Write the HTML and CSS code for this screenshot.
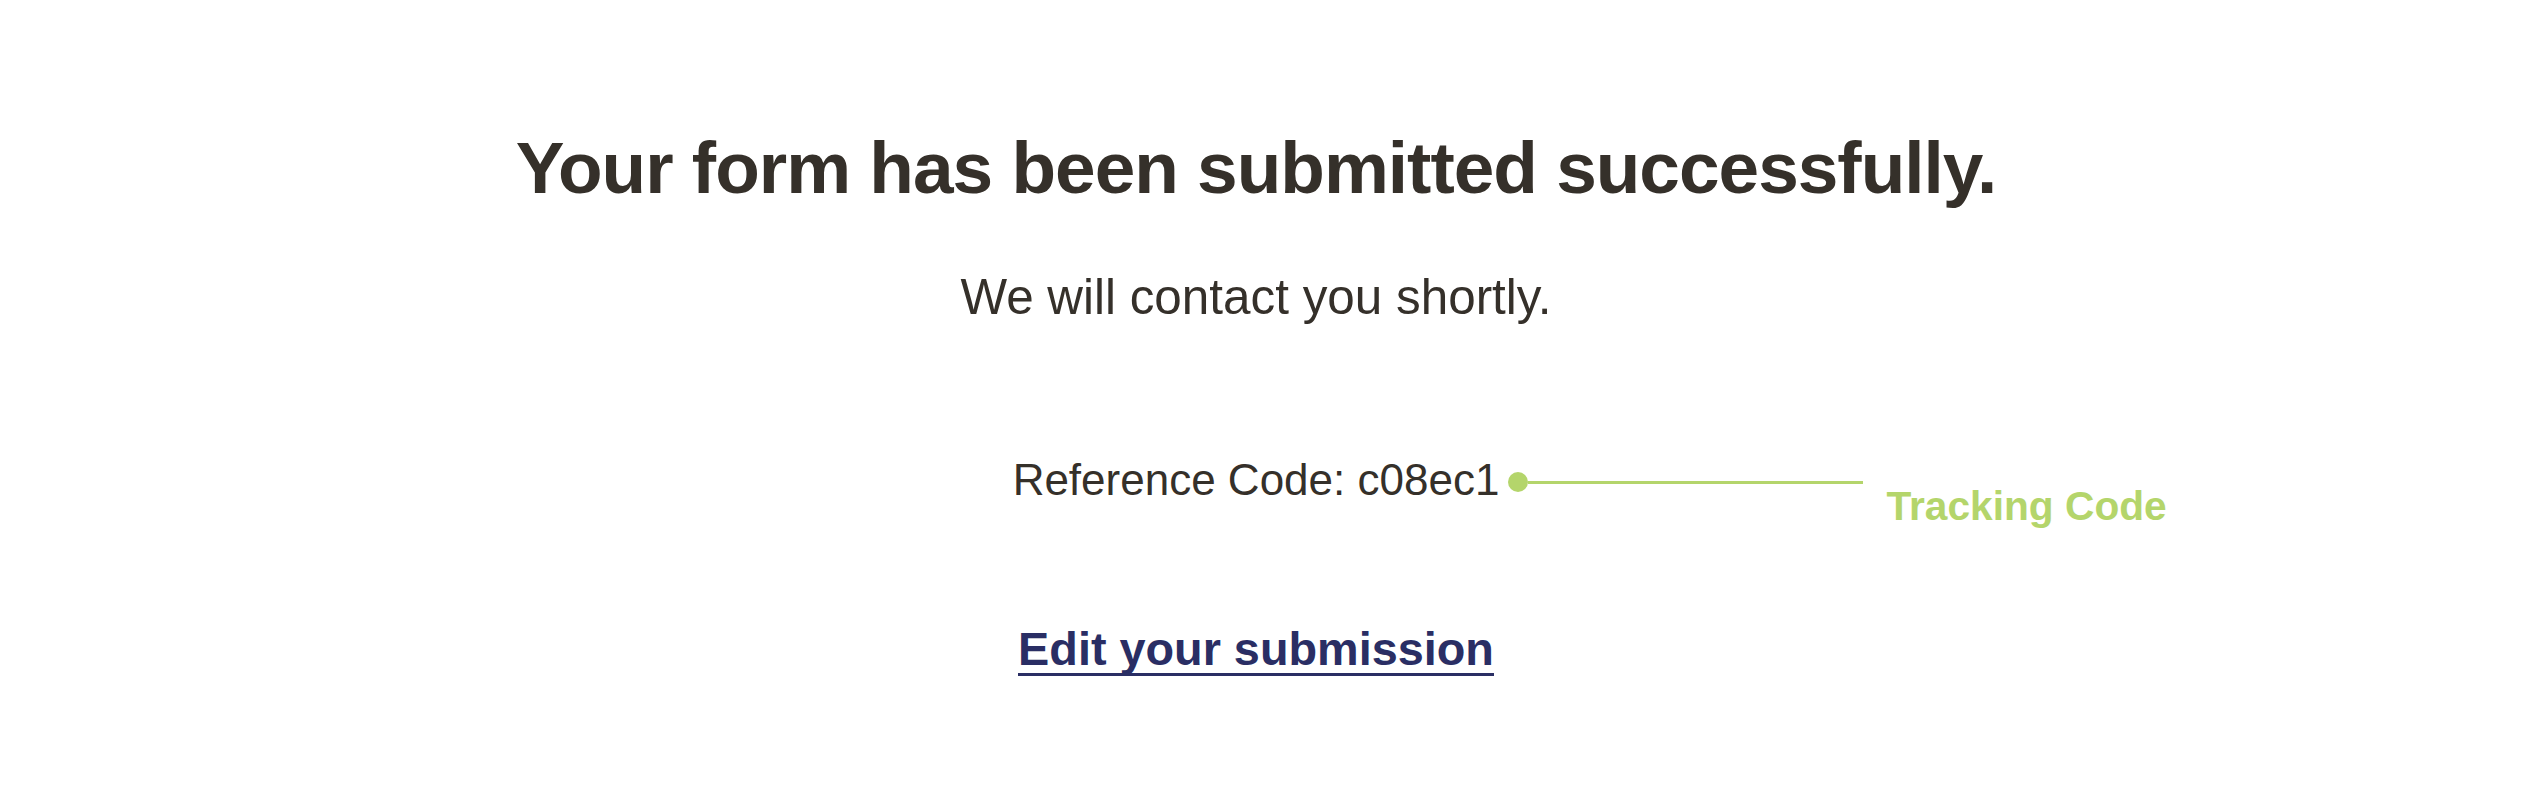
FILE: index.html
```html
<!DOCTYPE html>
<html lang="en">
<head>
  <meta charset="UTF-8" />
  <title>Form submitted</title>
  <meta name="viewport" content="width=device-width, initial-scale=1.0"/>
  <link rel="stylesheet" href="styles.css">
</head>
<body>
  <div class="thanks">
    <h1>Your form has been submitted successfully.</h1>
    <p class="lead">We will contact you shortly.</p>

    <div class="ref-line">
      <span class="ref">Reference Code: c08ec1
        <span class="note">
          <span class="pin"><i class="dot"></i><i class="wire"></i></span>
          <span class="note-label">Tracking Code</span>
        </span>
      </span>
    </div>

    <a class="edit" href="#">Edit your submission</a>
  </div>
</body>
</html>
```

FILE: styles.css
```css
body {
  margin: 0;
  background: #fff;
  font-family: "Liberation Sans", Arial, sans-serif;
  color: #35302a;
}
.thanks {
  width: calc(100% - 24px);
  text-align: center;
  padding-top: 131px;
}
h1 {
  margin: 0;
  font-size: 73px;
  line-height: 1;
  font-weight: bold;
  letter-spacing: -1px;
}
.lead {
  margin: 68px 0 0;
  font-size: 49.4px;
  line-height: 1;
}
.ref-line {
  margin-top: 137px;
}
.ref {
  position: relative;
  display: inline-block;
  font-size: 44px;
  line-height: 1;
}
.note {
  position: absolute;
  left: 100%;
  top: 0;
  width: 420px;
  text-align: left;
}
.pin {
  display: flex;
  align-items: center;
  margin: 14px 0 0 9px;
}
.dot {
  width: 20px;
  height: 20px;
  border-radius: 50%;
  background: #b4d56b;
}
.wire {
  width: 335px;
  height: 3px;
  background: #b4d56b;
}
.note-label {
  display: block;
  margin: -6px 0 0 387px;
  white-space: nowrap;
  font-size: 40.7px;
  line-height: 1;
  font-weight: bold;
  color: #b4d56b;
}
.edit {
  display: inline-block;
  margin-top: 124px;
  font-size: 46.8px;
  line-height: 1;
  font-weight: bold;
  color: #2a2e64;
  text-decoration: none;
  border-bottom: 3px solid #2a2e64;
}
```
